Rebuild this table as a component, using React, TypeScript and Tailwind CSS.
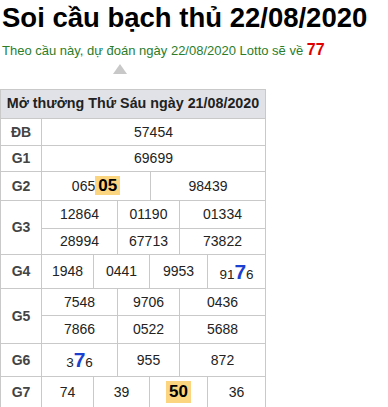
import React from "react";

const Hl = ({ children }: { children: React.ReactNode }) => (
  <span className="bg-[#fbd580] px-[3px] text-[17px] leading-[22px] font-bold text-black">{children}</span>
);

const Big7 = () => <span className="text-[21px] font-bold text-[#1b3fd1]">7</span>;

const Label = ({ text }: { text: string }) => (
  <div className="w-[41px] shrink-0 border-r border-[#c9c9c9] flex items-center justify-center font-bold text-[14px] text-[#444]">
    {text}
  </div>
);

const App = () => {
  return (
    <div className="w-[388px] h-[407px] bg-white font-['Liberation_Sans',Arial,sans-serif] text-[#222] overflow-hidden">
      <h1 className="mt-[2px] ml-[2px] text-[27.5px] leading-[31px] font-bold text-black">
        Soi cầu bạch thủ 22/08/2020
      </h1>
      <div className="mt-[7px] ml-[2px] text-[13px] leading-[20px] text-[#2b7d2b]">
        Theo cầu này, dự đoán ngày 22/08/2020 Lotto sẽ về{" "}
        <span className="text-[16px] font-bold text-[#e00000]">77</span>
      </div>
      <div className="mt-[3px] ml-[113px] w-0 h-0 border-l-[7.5px] border-r-[7.5px] border-b-[10px] border-l-transparent border-r-transparent border-b-[#c8c8c8]" />

      <div className="mt-[15px] w-[266px] border-l border-r border-b-2 border-[#c9c9c9] border-b-[#b5b5b5] text-[14px]">
        <div className="h-[29px] border-t border-[#c9c9c9] bg-[#e1e2e7] flex items-center justify-center font-bold text-[14.3px] text-[#222]">
          Mở thưởng Thứ Sáu ngày 21/08/2020
        </div>

        <div className="h-[27px] border-t border-[#c9c9c9] flex">
          <Label text="ĐB" />
          <div className="flex-1 flex items-center justify-center">57454</div>
        </div>

        <div className="h-[26px] border-t border-[#c9c9c9] flex">
          <Label text="G1" />
          <div className="flex-1 flex items-center justify-center">69699</div>
        </div>

        <div className="h-[29px] border-t border-[#c9c9c9] flex">
          <Label text="G2" />
          <div className="w-[109px] border-r border-[#c9c9c9] flex items-center justify-center">
            <span>
              065
              <Hl>05</Hl>
            </span>
          </div>
          <div className="flex-1 flex items-center justify-center">98439</div>
        </div>

        <div className="h-[54px] border-t border-[#c9c9c9] flex">
          <Label text="G3" />
          <div className="flex-1 flex flex-col">
            <div className="h-[27px] flex">
              <div className="w-[76px] border-r border-[#c9c9c9] flex items-center justify-center">12864</div>
              <div className="w-[62px] border-r border-[#c9c9c9] flex items-center justify-center">01190</div>
              <div className="flex-1 flex items-center justify-center">01334</div>
            </div>
            <div className="flex-1 border-t border-[#c9c9c9] flex">
              <div className="w-[76px] border-r border-[#c9c9c9] flex items-center justify-center">28994</div>
              <div className="w-[62px] border-r border-[#c9c9c9] flex items-center justify-center">67713</div>
              <div className="flex-1 flex items-center justify-center">73822</div>
            </div>
          </div>
        </div>

        <div className="h-[34px] border-t border-[#c9c9c9] flex">
          <Label text="G4" />
          <div className="w-[52px] border-r border-[#c9c9c9] flex items-center justify-center">1948</div>
          <div className="w-[56px] border-r border-[#c9c9c9] flex items-center justify-center">0441</div>
          <div className="w-[58px] border-r border-[#c9c9c9] flex items-center justify-center">9953</div>
          <div className="flex-1 flex items-center justify-center">
            <span className="text-[13.5px]">
              91
              <Big7 />6
            </span>
          </div>
        </div>

        <div className="h-[55px] border-t border-[#c9c9c9] flex">
          <Label text="G5" />
          <div className="flex-1 flex flex-col">
            <div className="h-[26px] flex">
              <div className="w-[76px] border-r border-[#c9c9c9] flex items-center justify-center">7548</div>
              <div className="w-[62px] border-r border-[#c9c9c9] flex items-center justify-center">9706</div>
              <div className="flex-1 flex items-center justify-center">0436</div>
            </div>
            <div className="flex-1 border-t border-[#c9c9c9] flex">
              <div className="w-[76px] border-r border-[#c9c9c9] flex items-center justify-center">7866</div>
              <div className="w-[62px] border-r border-[#c9c9c9] flex items-center justify-center">0522</div>
              <div className="flex-1 flex items-center justify-center">5688</div>
            </div>
          </div>
        </div>

        <div className="h-[33px] border-t border-[#c9c9c9] flex">
          <Label text="G6" />
          <div className="w-[76px] border-r border-[#c9c9c9] flex items-center justify-center">
            <span className="text-[13.5px]">
              3
              <Big7 />6
            </span>
          </div>
          <div className="w-[62px] border-r border-[#c9c9c9] flex items-center justify-center">955</div>
          <div className="flex-1 flex items-center justify-center">872</div>
        </div>

        <div className="h-[31px] border-t border-[#c9c9c9] flex">
          <Label text="G7" />
          <div className="w-[52px] border-r border-[#c9c9c9] flex items-center justify-center">74</div>
          <div className="w-[56px] border-r border-[#c9c9c9] flex items-center justify-center">39</div>
          <div className="w-[58px] border-r border-[#c9c9c9] flex items-center justify-center">
            <Hl>50</Hl>
          </div>
          <div className="flex-1 flex items-center justify-center">36</div>
        </div>
      </div>
    </div>
  );
};

export default App;
